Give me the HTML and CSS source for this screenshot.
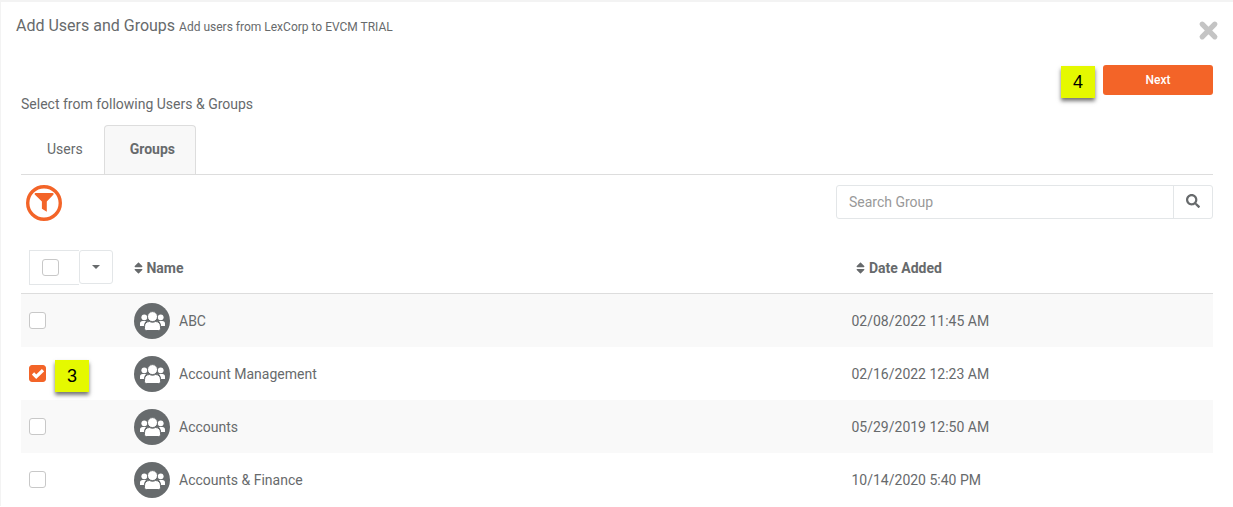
FILE: index.html
```
<!DOCTYPE html>
<html lang="en">
<head>
    <meta charset="UTF-8">
    <meta name="viewport" content="width=device-width, initial-scale=1.0">
    <title>Add Users and Groups</title>
    <link rel="stylesheet" href="styles.css">
</head>
<body>
    <!-- Shared icons -->
    <svg class="icon-defs" aria-hidden="true">
        <symbol id="icon-sort" viewBox="0 0 320 512">
            <path d="M41 288h238c21.4 0 32.1 25.9 17 41L177 448c-9.4 9.4-24.6 9.4-33.9 0L24 329c-15.1-15.1-4.4-41 17-41zm255-105L177 64c-9.4-9.4-24.6-9.4-33.9 0L24 183c-15.1 15.1-4.4 41 17 41h238c21.4 0 32.1-25.9 17-41z"/>
        </symbol>
        <symbol id="icon-group" viewBox="0 0 36 36">
            <circle cx="18" cy="18" r="18" fill="#676b6d"/>
            <g fill="#fff">
                <circle cx="10.3" cy="14.3" r="2.9"/>
                <circle cx="26.7" cy="14.3" r="2.9"/>
                <path d="M6 23v-2.400c0-1.700 1-2.700 2.600-2.700h3.600c-1.400 1.200-2.200 3-2.300 5.100z"/>
                <path d="M31 23v-2.400c0-1.700-1-2.700-2.600-2.700h-3.600c1.400 1.200 2.200 3 2.300 5.100z"/>
            </g>
            <g fill="#fff" stroke="#676b6d">
                <path d="M10.500 25.500v-1.700c0-3.300 2-5.300 5-5.300 2 .9 4 .9 6 0 3 0 5 2 5 5.300v1.700c0 1.300-.7 2-2 2h-12c-1.300 0-2-.7-2-2z"/>
                <circle cx="18.500" cy="13.600" r="5"/>
            </g>
        </symbol>
    </svg>

    <div class="modal">
        <header>
            <h1>Add Users and Groups <small>Add users from LexCorp to EVCM TRIAL</small></h1>
            <button type="button" class="close" aria-label="Close">
                <svg viewBox="0 0 20 20"><path d="M4 4l12 12M16 4L4 16"/></svg>
            </button>
        </header>

        <main>
            <div class="actions">
                <span class="step">4</span>
                <button type="button" class="next">Next</button>
            </div>

            <p class="intro">Select from following Users &amp; Groups</p>

            <nav class="tabs">
                <a href="#users">Users</a>
                <a href="#groups" class="active">Groups</a>
            </nav>

            <div class="toolbar">
                <button type="button" class="filter" aria-label="Filter">
                    <svg viewBox="0 0 36 36">
                        <circle cx="18" cy="18" r="16.300"/>
                        <path d="M9.500 8h17.200c1 0 1.300 1.100.6 1.800l-6.500 6.600v10.400l-4.900-3v-7.400l-6.900-6.600c-.7-.7-.5-1.800.5-1.800z"/>
                    </svg>
                </button>
                <form class="search">
                    <input type="text" placeholder="Search Group" aria-label="Search Group">
                    <button type="button" aria-label="Search">
                        <svg viewBox="0 0 512 512"><path d="M505 442.700L405.300 343c-4.500-4.500-10.600-7-17-7H372c27.600-35.300 44-79.700 44-128C416 93.100 322.900 0 208 0S0 93.100 0 208s93.100 208 208 208c48.300 0 92.700-16.400 128-44v16.300c0 6.400 2.500 12.500 7 17l99.700 99.700c9.400 9.400 24.600 9.400 33.900 0l28.300-28.300c9.400-9.400 9.400-24.600.1-34zM208 336c-70.700 0-128-57.200-128-128 0-70.700 57.200-128 128-128 70.700 0 128 57.200 128 128 0 70.700-57.200 128-128 128z"/></svg>
                    </button>
                </form>
            </div>

            <table>
                <thead>
                    <tr>
                        <th class="col-check">
                            <div class="select-all">
                                <label><input type="checkbox" aria-label="Select all"></label>
                                <button type="button" aria-label="Selection options"></button>
                            </div>
                        </th>
                        <th><svg class="sort"><use href="#icon-sort"/></svg> Name</th>
                        <th class="col-date"><svg class="sort"><use href="#icon-sort"/></svg> Date Added</th>
                    </tr>
                </thead>
                <tbody>
                    <tr>
                        <td><div class="check"><input type="checkbox" aria-label="ABC"></div></td>
                        <td><div class="name"><svg><use href="#icon-group"/></svg>ABC</div></td>
                        <td>02/08/2022 11:45 AM</td>
                    </tr>
                    <tr>
                        <td><div class="check"><input type="checkbox" aria-label="Account Management" checked><span class="step">3</span></div></td>
                        <td><div class="name"><svg><use href="#icon-group"/></svg>Account Management</div></td>
                        <td>02/16/2022 12:23 AM</td>
                    </tr>
                    <tr>
                        <td><div class="check"><input type="checkbox" aria-label="Accounts"></div></td>
                        <td><div class="name"><svg><use href="#icon-group"/></svg>Accounts</div></td>
                        <td>05/29/2019 12:50 AM</td>
                    </tr>
                    <tr>
                        <td><div class="check"><input type="checkbox" aria-label="Accounts &amp; Finance"></div></td>
                        <td><div class="name"><svg><use href="#icon-group"/></svg>Accounts &amp; Finance</div></td>
                        <td>10/14/2020 5:40 PM</td>
                    </tr>
                </tbody>
            </table>
        </main>
    </div>
</body>
</html>
```

FILE: styles.css
```
* {
    box-sizing: border-box;
}

body {
    margin: 0;
    font-family: Roboto, Arial, sans-serif;
    font-size: 14px;
    line-height: 20px;
    color: #676a6c;
    background-color: #fff;
}

button,
input {
    font-family: inherit;
    font-size: inherit;
    color: inherit;
}

button {
    padding: 0;
    background: none;
    border: none;
    cursor: pointer;
}

svg {
    display: block;
}

.icon-defs {
    display: none;
}

.modal {
    border-top: 2px solid #f3f3f3;
    border-left: 1px solid #f3f3f3;
}

/* Header */
header {
    display: flex;
    justify-content: space-between;
    align-items: flex-start;
    padding: 14px 14px 0 15px;
}

h1 {
    margin: 0;
    font-size: 16px;
    font-weight: 400;
}

h1 small {
    font-size: 12px;
}

.close {
    margin-top: 4px;
}

.close svg {
    width: 21px;
    height: 21px;
    fill: none;
    stroke: #c4c4c4;
    stroke-width: 5;
    stroke-linecap: round;
}

main {
    padding: 24px 20px 0;
}

.actions {
    display: flex;
    justify-content: flex-end;
    gap: 8px;
    height: 30px;
}

.next {
    width: 110px;
    height: 30px;
    font-size: 12px;
    font-weight: 500;
    color: #fff;
    background-color: #f36428;
    border-radius: 3px;
}

/* Numbered step notes */
.step {
    flex: none;
    width: 34px;
    height: 32px;
    margin-top: 1px;
    font-family: "Liberation Sans", Arial, sans-serif;
    font-size: 18px;
    line-height: 32px;
    text-align: center;
    color: #000;
    background-color: #e5f900;
    box-shadow: 0 3px 4px rgba(0, 0, 0, 0.55);
}

.intro {
    margin: 0 0 12px;
    line-height: 18px;
}

/* Tabs */
.tabs {
    display: flex;
    border-bottom: 1px solid #ddd;
}

.tabs a {
    height: 49px;
    padding: 0 20px 0 25px;
    line-height: 46px;
    color: inherit;
    text-decoration: none;
    border: 1px solid transparent;
    border-bottom: none;
    border-radius: 4px 4px 0 0;
}

.tabs .active {
    font-weight: 700;
    background-color: #f8f8f8;
    border-color: #ddd;
}

/* Filter and search */
.toolbar {
    display: flex;
    justify-content: space-between;
    align-items: flex-start;
    padding: 10px 0 21px 5px;
}

.filter svg {
    width: 36px;
    height: 36px;
    fill: #f36428;
}

.filter circle {
    fill: none;
    stroke: #f36428;
    stroke-width: 3.4;
}

.search {
    display: flex;
    width: 377px;
    height: 34px;
    border: 1px solid #e3e6e8;
    border-radius: 3px;
}

.search input {
    flex: 1;
    min-width: 0;
    padding: 0 12px;
    background: none;
    border: none;
}

.search input::placeholder {
    color: #999;
}

.search button {
    width: 39px;
    padding: 0 12px 3px;
    border-left: 1px solid #e3e6e8;
}

.search svg {
    width: 14px;
    height: 14px;
    fill: #676a6c;
}

/* Groups table */
table {
    width: 100%;
    table-layout: fixed;
    border-collapse: separate;
    border-spacing: 0;
}

.col-check {
    width: 105px;
}

.col-date {
    width: 31%;
}

th,
td {
    padding: 0 8px;
    text-align: left;
}

th {
    height: 52px;
    font-weight: 700;
    border-bottom: 1px solid #ddd;
}

th.col-date {
    padding-left: 13px;
}

td {
    height: 53px;
}

tbody tr:nth-child(odd) {
    background-color: #f9f9f9;
}

.sort {
    display: inline-block;
    width: 9px;
    height: 14px;
    vertical-align: -2px;
    fill: #676a6c;
}

.name {
    display: flex;
    align-items: center;
    gap: 9px;
}

.name svg {
    width: 36px;
    height: 36px;
}

.check {
    display: flex;
    position: relative;
}

.check .step {
    position: absolute;
    top: -6px;
    left: 26px;
}

input[type="checkbox"] {
    appearance: none;
    display: block;
    width: 17px;
    height: 17px;
    margin: 0;
    background-color: #fff;
    border: 1px solid #c8c8c8;
    border-radius: 3px;
}

input[type="checkbox"]:checked {
    background: #f36428 url("data:image/svg+xml,%3Csvg xmlns='http://www.w3.org/2000/svg' viewBox='0 0 12 12'%3E%3Cpath d='M1 5.500l3.200 3.200L11 2.200' fill='none' stroke='white' stroke-width='3.200'/%3E%3C/svg%3E") center / 12px 12px no-repeat;
    border-color: #f36428;
}

.select-all {
    display: flex;
    width: 84px;
}

.select-all label {
    display: flex;
    align-items: center;
    width: 50px;
    height: 35px;
    padding-left: 12px;
    border: 1px solid #e3e6e8;
    border-right: none;
}

.select-all button {
    display: flex;
    justify-content: center;
    align-items: center;
    width: 34px;
    height: 34px;
    border: 1px solid #e3e6e8;
    border-radius: 3px;
}

.select-all button::before {
    content: "";
    border-top: 4px solid #676a6c;
    border-left: 4px solid transparent;
    border-right: 4px solid transparent;
}
```
